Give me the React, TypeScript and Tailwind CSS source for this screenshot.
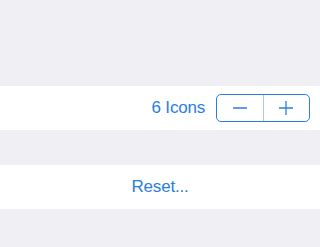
export default function App() {
  return (
    <div className="w-[320px] h-[247px] bg-[#efeff4] flex flex-col" style={{ fontFamily: '"Liberation Sans", Arial, sans-serif' }}>
      <div className="h-[86px]" />
      <div className="h-[44px] bg-white flex items-center justify-end pr-[10px]">
        <span className="text-[17px] text-[#2a7de1] mr-[11px] tracking-[-0.2px]">6 Icons</span>
        <div className="flex w-[94px] h-[28px] border border-[#2a7de1] rounded-[5px] overflow-hidden">
          <button className="flex-1 flex items-center justify-center">
            <svg width="16" height="16" viewBox="0 0 16 16">
              <path d="M1 8h14" stroke="#2a7de1" strokeWidth="1.3" />
            </svg>
          </button>
          <div className="w-px bg-[#a9c8f2]" />
          <button className="flex-1 flex items-center justify-center">
            <svg width="16" height="16" viewBox="0 0 16 16">
              <path d="M1 8h14M8 1v14" stroke="#2a7de1" strokeWidth="1.3" />
            </svg>
          </button>
        </div>
      </div>
      <div className="h-[35px]" />
      <div className="h-[44px] bg-white flex items-center justify-center">
        <span className="text-[17px] text-[#2a7de1] tracking-[-0.2px]">Reset...</span>
      </div>
    </div>
  );
}
